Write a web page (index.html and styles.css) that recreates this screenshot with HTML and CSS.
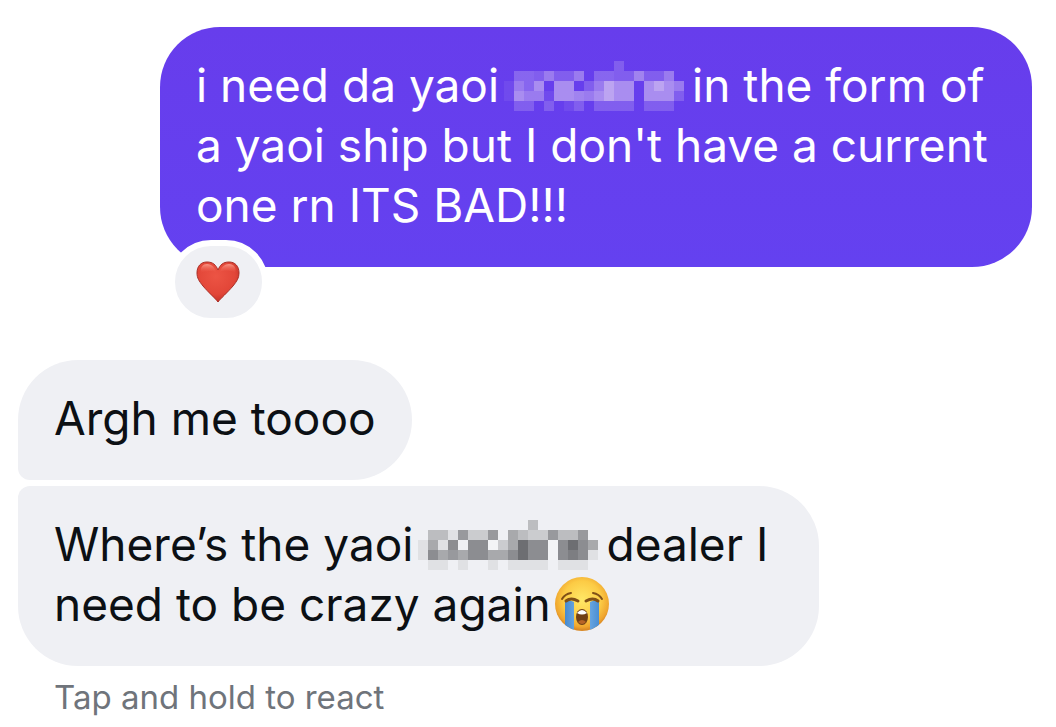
FILE: index.html
```html
<!DOCTYPE html>
<html lang="en">
<head>
<meta charset="utf-8">
<meta name="viewport" content="width=device-width, initial-scale=1">
<title>Chat</title>
<link rel="stylesheet" href="styles.css">
</head>
<body>
<main class="chat">
  <article class="message message-sent">
    <p class="text">i need da yaoi<svg class="censor" viewBox="0 0 18 5" shape-rendering="crispEdges" role="img" aria-label="censored word" fill="#fff4f4">
      <path fill-opacity=".07" d="M0 2h1v1h-1zM4 3h1v1h-1zM7 3h1v1h-1zM13 1h1v1h-1zM0 3h1v1h-1zM6 4h1v1h-1z"/>
      <path fill-opacity=".18" d="M11 0h1v1h-1zM3 1h1v1h-1zM5 1h2v1h-2zM11 1h2v1h-2zM14 1h2v1h-2zM8 2h1v1h-1zM17 3h1v1h-1zM1 4h2v1h-2zM4 4h1v1h-1zM7 4h1v1h-1zM9 4h4v1h-4zM14 4h3v1h-3z"/>
      <path fill-opacity=".22" d="M1 1h2v1h-2zM9 1h2v1h-2zM2 2h1v1h-1z"/>
      <path fill-opacity=".34" d="M4 1h1v1h-1zM7 1h1v1h-1zM13 1h1v1h-1zM16 1h1v1h-1zM1 2h1v1h-1zM9 2h1v1h-1zM17 2h1v1h-1zM2 3h2v1h-2zM7 3h2v1h-2z"/>
      <path fill-opacity=".44" d="M3 2h1v1h-1zM5 2h2v2h-2zM11 2h2v2h-2zM14 2h1v2h-1zM16 2h1v2h-1zM1 3h1v1h-1zM9 3h1v1h-1zM15 3h1v1h-1z"/>
      <path fill-opacity=".56" d="M10 2h1v2h-1zM15 2h1v1h-1z"/>
    </svg>in the form of a yaoi ship but I don't have a current one rn ITS BAD!!!</p>
    <button class="reaction" type="button" aria-label="Heart reaction">
      <svg class="heart" viewBox="0 0 44 42" aria-hidden="true">
        <defs>
          <radialGradient id="heart-fill" cx=".45" cy=".35" r=".7">
            <stop offset="0" stop-color="#ec5444"/>
            <stop offset=".65" stop-color="#e24638"/>
            <stop offset="1" stop-color="#bd2c23"/>
          </radialGradient>
          <linearGradient id="heart-shine" x1="0" y1="0" x2="0" y2="1">
            <stop offset="0" stop-color="#ffb2a1" stop-opacity=".75"/>
            <stop offset="1" stop-color="#ef5746" stop-opacity="0"/>
          </linearGradient>
        </defs>
        <path d="M22 41C20 38 12 31 7 25C3 20 1 17 1 12C1 5 5 1 11 1C17 1 20 4 22 9C24 4 27 1 33 1C39 1 43 5 43 12C43 17 41 20 37 25C32 31 24 38 22 41Z" fill="url(#heart-fill)" stroke="#a92c23" stroke-width="1"/>
        <path d="M5 12C4 6 7 3 11 3C16 3 19 7 20 11C14 9 9 10 5 12ZM24 11C25 6 29 3 33 3C38 3 41 7 39 12C35 9 29 9 24 11Z" fill="url(#heart-shine)"/>
      </svg>
    </button>
  </article>

  <section class="group">
    <article class="message message-received message-first">
      <p class="text">Argh me toooo</p>
    </article>
    <article class="message message-received message-last">
      <p class="text">Where’s the yaoi<svg class="censor" viewBox="0 0 18 5" shape-rendering="crispEdges" role="img" aria-label="censored word">
        <path fill="#e0e1e4" d="M0 2h1v2h-1zM3 1h1v1h-1zM2 2h1v1h-1zM17 3h1v1h-1zM1 4h2v1h-2zM4 4h1v1h-1zM7 4h1v1h-1zM9 4h4v1h-4zM14 4h3v1h-3z"/>
        <path fill="#cbcccf" d="M5 1h2v1h-2zM11 1h2v1h-2zM8 2h1v1h-1z"/>
        <path fill="#bcbdc0" d="M11 0h1v1h-1zM1 1h2v1h-2zM10 1h1v1h-1zM14 1h2v1h-2z"/>
        <path fill="#a8a9ac" d="M9 1h1v1h-1zM1 2h1v1h-1zM9 2h1v1h-1zM17 2h1v1h-1zM2 3h1v1h-1zM4 3h1v1h-1zM7 3h2v1h-2z"/>
        <path fill="#98999d" d="M4 1h1v1h-1zM7 1h1v1h-1zM13 1h1v1h-1zM16 1h1v1h-1zM3 3h1v1h-1z"/>
        <path fill="#8c8d91" d="M3 2h1v1h-1zM5 2h2v2h-2zM11 2h2v2h-2zM14 2h1v2h-1zM16 2h1v2h-1zM1 3h1v1h-1zM9 3h1v1h-1z"/>
        <path fill="#6d6e72" d="M10 2h1v2h-1zM15 2h1v1h-1z"/>
        <path fill="#7d7e82" d="M15 3h1v1h-1z"/>
        <path fill="#f3f4f6" d="M7 2h1v1h-1zM13 2h1v2h-1z"/>
      </svg>dealer I need to be crazy again<svg class="emoji" viewBox="0 0 56 56" role="img" aria-label="loudly crying face">
        <defs>
          <radialGradient id="face" cx=".5" cy=".42" r=".56">
            <stop offset="0" stop-color="#ffe867"/>
            <stop offset=".62" stop-color="#fccb45"/>
            <stop offset=".9" stop-color="#efa52e"/>
            <stop offset="1" stop-color="#d98925"/>
          </radialGradient>
          <linearGradient id="tear" x1="0" y1="0" x2="1" y2="0">
            <stop offset="0" stop-color="#4689ce"/>
            <stop offset=".5" stop-color="#80b9ed"/>
            <stop offset="1" stop-color="#4a8ed2"/>
          </linearGradient>
          <clipPath id="face-clip"><circle cx="28" cy="28" r="27"/></clipPath>
        </defs>
        <circle cx="28" cy="28" r="27" fill="url(#face)"/>
        <g clip-path="url(#face-clip)">
          <path d="M11 26Q15 23 20 26V56H11ZM36 26Q41 23 45 26V56H36Z" fill="url(#tear)"/>
        </g>
        <path d="M8 23Q11 18 17 17M39 17Q45 18 48 23" fill="none" stroke="#805017" stroke-width="2" stroke-linecap="round"/>
        <path d="M12 25Q17 21 24 25M32 25Q39 21 44 25" fill="none" stroke="#805017" stroke-width="3" stroke-linecap="round"/>
        <ellipse cx="28" cy="41" rx="6" ry="8" fill="#714015"/>
        <path d="M23 37Q28 31 33 37Q28 40 23 37Z" fill="#fff"/>
        <path d="M24 46Q28 42 32 46Q28 50 24 46Z" fill="#b76427"/>
      </svg></p>
    </article>
    <p class="hint">Tap and hold to react</p>
  </section>
</main>
</body>
</html>
```
FILE: styles.css
```css
* {
  box-sizing: border-box;
}

body {
  margin: 0;
  background: #fff;
  color: #0c1014;
  font-family: Inter, "Liberation Sans", sans-serif;
}

.chat {
  display: flex;
  flex-direction: column;
  gap: 93px;
  padding: 27px 24px 8px 18px;
}

.message {
  position: relative;
  padding: 28px 36px 32px;
  border-radius: 60px;
}

.message-sent {
  align-self: flex-end;
  max-width: 86%;
  background: linear-gradient(#673dec, #6441f0);
  color: #fff;
}

.message-received {
  max-width: 79%;
  background: #eff0f4;
}

.message-first {
  border-bottom-left-radius: 12px;
}

.message-last {
  border-top-left-radius: 12px;
}

.text {
  margin: 0;
  font-size: 46px;
  line-height: 60px;
}

.censor {
  width: 180px;
  height: 50px;
  margin: 0 8px 0 5px;
  vertical-align: -9px;
}

.emoji {
  width: 56px;
  height: 56px;
  margin-left: 3px;
  vertical-align: -11px;
}

.reaction {
  position: absolute;
  left: 9px;
  bottom: -57px;
  display: grid;
  place-items: center;
  width: 99px;
  height: 84px;
  padding: 0;
  border: 6px solid #fff;
  border-radius: 42px;
  background: #eff0f4;
}

.heart {
  width: 44px;
  height: 42px;
}

.group {
  display: flex;
  flex-direction: column;
  align-items: flex-start;
  gap: 6px;
}

.hint {
  margin: 0;
  padding: 6px 36px;
  color: #6f747b;
  font-size: 33px;
  line-height: 38px;
}
```
